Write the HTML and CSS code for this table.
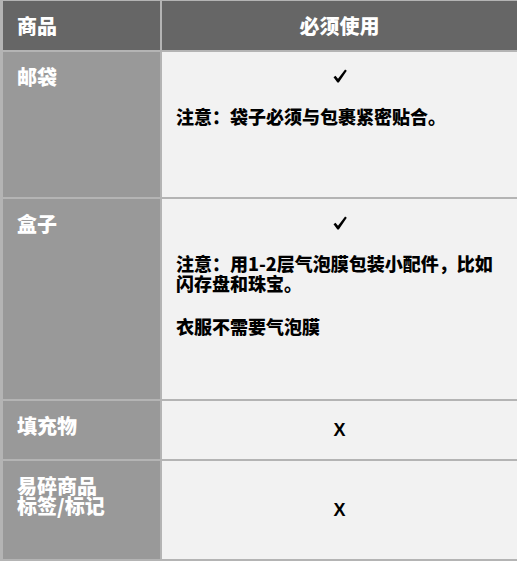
FILE: index.html
```html
<!DOCTYPE html>
<html lang="zh-CN">
<head>
<meta charset="utf-8">
<title>包装要求</title>
<link rel="stylesheet" href="styles.css">
</head>
<body>
<div class="tbl">
  <div class="cell head left">商品</div>
  <div class="cell head right">必须使用</div>

  <div class="cell name">邮袋</div>
  <div class="cell body top">
    <div class="mark"><svg class="check" viewBox="0 0 14 14" width="14" height="14"><path d="M0.5 8.3 L2.5 6.7 L5.0 9.7 L12.1 0.5 L13.8 1.7 L5.8 13.5 L4.4 13.5 Z"/></svg></div>
    <p class="note">注意：袋子必须与包裹紧密贴合。</p>
  </div>

  <div class="cell name">盒子</div>
  <div class="cell body top">
    <div class="mark"><svg class="check" viewBox="0 0 14 14" width="14" height="14"><path d="M0.5 8.3 L2.5 6.7 L5.0 9.7 L12.1 0.5 L13.8 1.7 L5.8 13.5 L4.4 13.5 Z"/></svg></div>
    <p class="note">注意：用1-2层气泡膜包装小配件，比如<br>闪存盘和珠宝。</p>
    <p class="note extra">衣服不需要气泡膜</p>
  </div>

  <div class="cell name">填充物</div>
  <div class="cell body mid"><span class="cross">X</span></div>

  <div class="cell name">易碎商品<br>标签/标记</div>
  <div class="cell body mid"><span class="cross">X</span></div>
</div>
</body>
</html>
```

FILE: styles.css
```css
html, body {
  margin: 0;
  padding: 0;
  background: #ffffff;
}

body {
  font-family: "Noto Sans CJK SC", "Noto Sans", sans-serif;
  font-weight: 900;
}

.tbl {
  display: grid;
  grid-template-columns: 157px 355px;
  grid-template-rows: 49px 145px 200px 58px 98px;
  gap: 2px;
  padding: 1px 2px 2px 3px;
  background: #b4b4b4;
  width: 512px;
}

.cell {
  box-sizing: border-box;
}

.head {
  background: #666666;
  color: #ffffff;
  font-size: 20px;
  line-height: 20px;
  display: flex;
  align-items: center;
}

.head.left {
  padding-left: 14px;
}

.head.right {
  justify-content: center;
}

.name {
  background: #999999;
  color: #ffffff;
  font-size: 20px;
  line-height: 20px;
  padding: 15px 14px 0 14px;
}

.body {
  background: #f2f2f2;
  color: #000000;
  font-size: 18px;
  line-height: 20px;
  padding: 14px 13px 0 14px;
}

.body.mid {
  display: flex;
  align-items: center;
  justify-content: center;
  padding: 0;
}

.mark {
  height: 20px;
  display: flex;
  align-items: center;
  justify-content: center;
  margin-bottom: 20px;
}

.check {
  display: block;
  fill: #000000;
}

.note {
  margin: 0;
}

.note.extra {
  margin-top: 23px;
}

.cross {
  font-family: "Liberation Sans", Arial, sans-serif;
  font-weight: 700;
  font-size: 18px;
  line-height: 20px;
}
```
